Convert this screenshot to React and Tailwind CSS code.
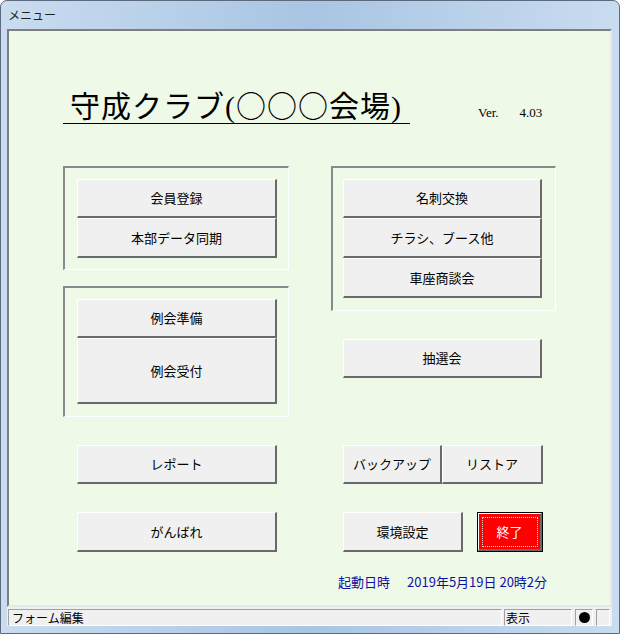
const btnBase =
  'flex items-center justify-center bg-[#f0f0f0] border-t border-l border-t-white border-l-white border-r-2 border-b-2 border-r-[#6a6a6a] border-b-[#6a6a6a] text-[13px] text-black'

const Btn = ({ label, className = '' }) => (
  <div className={`${btnBase} ${className}`}>{label}</div>
)

const Frame = ({ className = '', children }) => (
  <div
    className={`flex flex-col border-t-2 border-l-2 border-t-[#8a8a8a] border-l-[#8a8a8a] border-r border-b border-r-white border-b-white ${className}`}
  >
    {children}
  </div>
)

const App = () => {
  return (
    <div
      className="w-[620px] h-[634px] flex flex-col rounded-t-[7px] border border-[#5b6a7d] bg-gradient-to-r from-[#c9dcf0] via-[#a9c5e3] to-[#c9dcf0] pl-[6px] pr-[7px] pb-[7px]"
      style={{ fontFamily: '"Noto Sans CJK JP", "Noto Sans", sans-serif' }}
    >
      {/* title bar */}
      <div className="h-[28px] flex items-center pl-[1px] text-[12px] text-[#1e1e1e]">メニュー</div>

      <div className="flex-1 flex flex-col bg-[#f0f0f0]">
        {/* main panel */}
        <div className="flex-1 flex flex-col border-2 border-t-[#7e7e7e] border-l-[#7e7e7e] border-r-[#e8e8e8] border-b-[#e8e8e8] bg-[#eff9e8] pl-[54px]">
          {/* heading */}
          <div className="flex items-end mt-[55px]">
            <div
              className="w-[347px] h-[38px] border-b border-black pl-[7px] text-[30px] leading-[36px] tracking-[1px] text-black whitespace-nowrap"
              style={{ fontFamily: '"Liberation Serif", "Noto Sans CJK JP", serif' }}
            >
              守成クラブ(
              <span style={{ fontFamily: '"Noto Sans CJK JP", sans-serif' }}>○○○</span>
              会場)
            </div>
            <div
              className="flex ml-[68px] mb-[3px] text-[13px] leading-[16px] text-black"
              style={{ fontFamily: '"Liberation Serif", "Noto Sans CJK JP", serif' }}
            >
              <span>Ver.</span>
              <span className="ml-[21px]">4.03</span>
            </div>
          </div>

          {/* groups */}
          <div className="flex items-start mt-[42px]">
            <div className="flex flex-col w-[226px]">
              <Frame className="h-[104px] pt-[11px] pl-[12px]">
                <Btn label="会員登録" className="w-[200px] h-[39px]" />
                <Btn label="本部データ同期" className="w-[200px] h-[40px]" />
              </Frame>
              <Frame className="h-[131px] mt-[16px] pt-[11px] pl-[12px]">
                <Btn label="例会準備" className="w-[200px] h-[39px]" />
                <Btn label="例会受付" className="w-[200px] h-[66px]" />
              </Frame>
            </div>
            <div className="flex flex-col ml-[42px] w-[225px]">
              <Frame className="h-[145px] pt-[11px] pl-[10px]">
                <Btn label="名刺交換" className="w-[199px] h-[39px]" />
                <Btn label="チラシ、ブース他" className="w-[199px] h-[40px]" />
                <Btn label="車座商談会" className="w-[199px] h-[40px]" />
              </Frame>
              <Btn label="抽選会" className="w-[199px] h-[39px] mt-[28px] ml-[12px]" />
            </div>
          </div>

          {/* bottom rows */}
          <div className="flex mt-[28px] pl-[14px]">
            <Btn label="レポート" className="w-[200px] h-[39px]" />
            <Btn label="バックアップ" className="w-[99px] h-[39px] ml-[66px]" />
            <Btn label="リストア" className="w-[101px] h-[39px]" />
          </div>
          <div className="flex mt-[28px] pl-[14px]">
            <Btn label="がんばれ" className="w-[200px] h-[40px]" />
            <Btn label="環境設定" className="w-[120px] h-[40px] ml-[66px]" />
            <div className="relative ml-[14px] w-[66px] h-[40px] border border-black">
              <div className="w-full h-full flex items-center justify-center bg-[#ff0000] border-t border-l border-t-white border-l-white border-r-2 border-b-2 border-r-[#6a6a6a] border-b-[#6a6a6a] text-[13px] text-white">
                終了
              </div>
              <div className="absolute inset-[4px] border border-dotted border-[#ffd0d0]" />
            </div>
          </div>

          <div className="flex mt-[22px] ml-[275px] text-[13px] leading-[16px] text-[#0f0fa0]">
            <span>起動日時</span>
            <span className="ml-[17px]">2019年5月19日 20時2分</span>
          </div>
        </div>

        {/* status bar */}
        <div className="h-[19px] flex items-stretch pt-[2px] bg-[#f0f0f0] text-[12px] leading-[15px] text-black">
          <div className="w-[494px] ml-[1px] border border-t-[#a0a0a0] border-l-[#a0a0a0] border-r-white border-b-white pl-[3px]">
            フォーム編集
          </div>
          <div className="w-[68px] ml-[2px] border border-t-[#a0a0a0] border-l-[#a0a0a0] border-r-white border-b-white pl-[1px]">
            表示
          </div>
          <div className="w-[18px] ml-[3px] border border-t-[#a0a0a0] border-l-[#a0a0a0] border-r-white border-b-white flex items-center justify-center">
            <div className="w-[11px] h-[11px] rounded-full bg-black" />
          </div>
          <div className="w-[14px] ml-[3px] border border-t-[#a0a0a0] border-l-[#a0a0a0] border-r-white border-b-white" />
        </div>
      </div>
    </div>
  )
}

export default App
